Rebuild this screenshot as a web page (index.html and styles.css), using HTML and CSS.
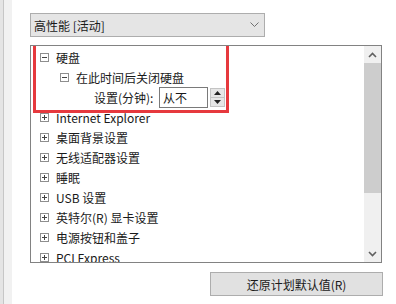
FILE: index.html
```html
<!DOCTYPE html>
<html lang="zh-CN">
<head>
    <meta charset="UTF-8">
    <title>电源选项 - 高级设置</title>
    <link rel="stylesheet" href="styles.css">
</head>
<body>
    <div class="edge"><div class="edge-inner"></div></div>

    <div class="panel">
        <div class="combo">
            <span>高性能 [活动]</span>
            <svg class="chevron" width="9" height="6" viewBox="0 0 9 6"><path d="M0.5 0.5 L4.5 4.5 L8.5 0.5" fill="none" stroke="#707070" stroke-width="1"/></svg>
        </div>

        <div class="list">
            <div class="tree">
                <div class="row">
                    <svg class="toggle" width="9" height="9" viewBox="0 0 9 9"><rect x="0.5" y="0.5" width="8" height="8" fill="#fff" stroke="#8e8e8e"/><path d="M2 4.5 H7" stroke="#444"/></svg>
                    <span>硬盘</span>
                </div>
                <div class="row level-1">
                    <svg class="toggle" width="9" height="9" viewBox="0 0 9 9"><rect x="0.5" y="0.5" width="8" height="8" fill="#fff" stroke="#8e8e8e"/><path d="M2 4.5 H7" stroke="#444"/></svg>
                    <span>在此时间后关闭硬盘</span>
                </div>
                <div class="row level-2">
                    <span class="label">设置(分钟):</span>
                    <div class="spin-input">从不</div>
                    <div class="spinner">
                        <div class="spin-btn"><svg width="7" height="4" viewBox="0 0 7 4"><path d="M0 4 L3.5 0 L7 4 Z" fill="#222"/></svg></div>
                        <div class="spin-btn"><svg width="7" height="4" viewBox="0 0 7 4"><path d="M0 0 L3.5 4 L7 0 Z" fill="#222"/></svg></div>
                    </div>
                </div>
                <div class="row">
                    <svg class="toggle" width="9" height="9" viewBox="0 0 9 9"><rect x="0.5" y="0.5" width="8" height="8" fill="#fff" stroke="#8e8e8e"/><path d="M2 4.5 H7 M4.5 2 V7" stroke="#444"/></svg>
                    <span>Internet Explorer</span>
                </div>
                <div class="row">
                    <svg class="toggle" width="9" height="9" viewBox="0 0 9 9"><rect x="0.5" y="0.5" width="8" height="8" fill="#fff" stroke="#8e8e8e"/><path d="M2 4.5 H7 M4.5 2 V7" stroke="#444"/></svg>
                    <span>桌面背景设置</span>
                </div>
                <div class="row">
                    <svg class="toggle" width="9" height="9" viewBox="0 0 9 9"><rect x="0.5" y="0.5" width="8" height="8" fill="#fff" stroke="#8e8e8e"/><path d="M2 4.5 H7 M4.5 2 V7" stroke="#444"/></svg>
                    <span>无线适配器设置</span>
                </div>
                <div class="row">
                    <svg class="toggle" width="9" height="9" viewBox="0 0 9 9"><rect x="0.5" y="0.5" width="8" height="8" fill="#fff" stroke="#8e8e8e"/><path d="M2 4.5 H7 M4.5 2 V7" stroke="#444"/></svg>
                    <span>睡眠</span>
                </div>
                <div class="row">
                    <svg class="toggle" width="9" height="9" viewBox="0 0 9 9"><rect x="0.5" y="0.5" width="8" height="8" fill="#fff" stroke="#8e8e8e"/><path d="M2 4.5 H7 M4.5 2 V7" stroke="#444"/></svg>
                    <span>USB 设置</span>
                </div>
                <div class="row">
                    <svg class="toggle" width="9" height="9" viewBox="0 0 9 9"><rect x="0.5" y="0.5" width="8" height="8" fill="#fff" stroke="#8e8e8e"/><path d="M2 4.5 H7 M4.5 2 V7" stroke="#444"/></svg>
                    <span>英特尔(R) 显卡设置</span>
                </div>
                <div class="row">
                    <svg class="toggle" width="9" height="9" viewBox="0 0 9 9"><rect x="0.5" y="0.5" width="8" height="8" fill="#fff" stroke="#8e8e8e"/><path d="M2 4.5 H7 M4.5 2 V7" stroke="#444"/></svg>
                    <span>电源按钮和盖子</span>
                </div>
                <div class="row">
                    <svg class="toggle" width="9" height="9" viewBox="0 0 9 9"><rect x="0.5" y="0.5" width="8" height="8" fill="#fff" stroke="#8e8e8e"/><path d="M2 4.5 H7 M4.5 2 V7" stroke="#444"/></svg>
                    <span>PCI Express</span>
                </div>
            </div>

            <div class="scrollbar">
                <div class="arrow"><svg width="9" height="6" viewBox="0 0 9 6"><path d="M1 5 L4.5 1.5 L8 5" fill="none" stroke="#606060" stroke-width="1.6"/></svg></div>
                <div class="thumb"></div>
                <div class="track"></div>
                <div class="arrow"><svg width="9" height="6" viewBox="0 0 9 6"><path d="M1 1 L4.5 4.5 L8 1" fill="none" stroke="#606060" stroke-width="1.6"/></svg></div>
            </div>

            <!-- Highlight around the hard disk setting -->
            <div class="highlight"></div>
        </div>

        <button class="restore-btn">还原计划默认值(R)</button>
    </div>
</body>
</html>
```

FILE: styles.css
```css
* {
    box-sizing: border-box;
    margin: 0;
    padding: 0;
}

body {
    display: flex;
    height: 304px;
    overflow: hidden;
    background: #fff;
    color: #1a1a1a;
    font-family: "Noto Sans CJK SC", "Noto Sans", sans-serif;
    font-size: 12px;
}

.edge {
    width: 12px;
    padding-left: 3px;
    background: #e4e4e4;
}

.edge-inner {
    height: 100%;
    background: #f1f1f1;
    border-left: 1px solid #c6c6c6;
}

.panel {
    padding: 13px 0 0 18px;
}

.combo {
    display: flex;
    align-items: center;
    justify-content: space-between;
    width: 235px;
    height: 24px;
    padding: 0 5px 0 3px;
    background: #e5e5e5;
    border: 1px solid #adadad;
}

.chevron {
    margin-right: 0;
}

.list {
    position: relative;
    display: flex;
    width: 352px;
    height: 218px;
    margin-top: 8px;
    border: 1px solid #828282;
    overflow: hidden;
}

.tree {
    flex: 1;
    padding: 1px 0 0 9px;
}

.row {
    display: flex;
    align-items: center;
    height: 20px;
    white-space: nowrap;
}

.toggle {
    flex: none;
    margin-right: 7px;
}

.level-1 {
    padding-left: 20px;
}

.level-2 {
    padding-left: 54px;
}

.label {
    width: 65px;
}

.spin-input {
    width: 49px;
    height: 21px;
    padding: 0 3px;
    line-height: 19px;
    border: 1px solid #7a7a7a;
    background: #fff;
}

.spinner {
    display: flex;
    flex-direction: column;
    width: 15px;
    height: 19px;
    margin-left: 2px;
    border: 1px solid #c4c4c4;
}

.spin-btn {
    flex: 1;
    display: flex;
    align-items: center;
    justify-content: center;
    background: #e6e6e6;
}

.spin-btn + .spin-btn {
    border-top: 1px solid #c4c4c4;
}

.scrollbar {
    display: flex;
    flex-direction: column;
    width: 17px;
    background: #f0f0f0;
}

.arrow {
    display: flex;
    align-items: center;
    justify-content: center;
    height: 17px;
}

.thumb {
    height: 130px;
    background: #cdcdcd;
}

.track {
    flex: 1;
}

.highlight {
    position: absolute;
    left: 2px;
    top: -5px;
    width: 196px;
    height: 72px;
    border: 3px solid #e6393e;
}

.restore-btn {
    display: block;
    width: 173px;
    height: 24px;
    margin: 9px 0 0 180px;
    background: #e1e1e1;
    border: 1px solid #adadad;
    color: #1a1a1a;
    font-family: inherit;
    font-size: 12px;
}
```
